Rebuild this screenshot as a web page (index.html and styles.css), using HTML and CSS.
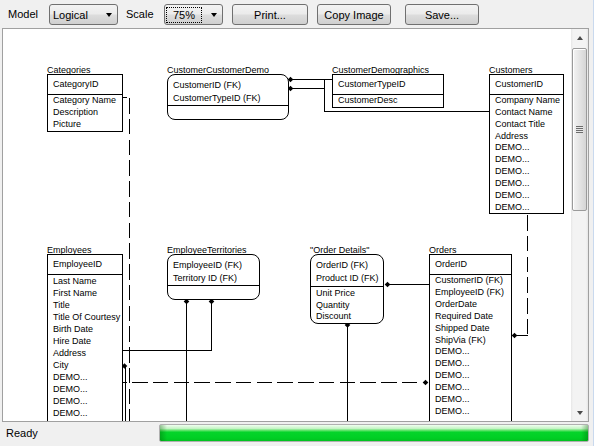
FILE: index.html
```html
<!DOCTYPE html>
<html>
<head>
<meta charset="utf-8">
<link rel="stylesheet" href="styles.css">
</head>
<body>
<div class="app">
  <div class="toolbar">
    <span class="lbl lbl-model">Model</span>
    <div class="combo combo-model"><span class="val">Logical</span><span class="arrow"></span></div>
    <span class="lbl lbl-scale">Scale</span>
    <div class="combo combo-scale"><span class="val focus">75%</span><span class="arrow"></span></div>
    <button class="btn btn-print">Print...</button>
    <button class="btn btn-copy">Copy Image</button>
    <button class="btn btn-save">Save...</button>
  </div>

  <div class="canvas">
    <div class="diagram">
      <svg class="links" width="568" height="392" viewBox="3 29 568 392">
        <g class="solid">
          <path d="M290 79.5 H332"/>
          <path d="M290 88.5 H324.5"/>
          <path d="M324.5 79 V111.5 H489"/>
          <path d="M122 97.5 H127"/>
          <path d="M515 335.5 H528"/>
          <path d="M211.5 301 V350.5 H122"/>
          <path d="M186.5 301 V421"/>
          <path d="M387 284.5 H429"/>
          <path d="M347.5 325 V421"/>
          <path d="M125.5 366 V421"/>
        </g>
        <g class="dashed">
          <path d="M129.5 98 V421"/>
          <path d="M527.5 215 V335"/>
          <path class="dash-h" d="M122 382.5 H425"/>
        </g>
        <g class="dia">
          <polygon points="290.5,76.7 293.3,79.5 290.5,82.3 287.7,79.5"/>
          <polygon points="290.5,85.7 293.3,88.5 290.5,91.3 287.7,88.5"/>
          <polygon points="514.5,332.7 517.3,335.5 514.5,338.3 511.7,335.5"/>
          <polygon points="211.5,298.7 214.3,301.5 211.5,304.3 208.7,301.5"/>
          <polygon points="186.5,298.7 189.3,301.5 186.5,304.3 183.7,301.5"/>
          <polygon points="387.5,281.7 390.3,284.5 387.5,287.3 384.7,284.5"/>
          <polygon points="347.5,322.2 350.3,325 347.5,327.8 344.7,325"/>
          <polygon points="425.5,379.7 428.3,382.5 425.5,385.3 422.7,382.5"/>
          <polygon points="124.5,363.2 127.3,366 124.5,368.8 121.7,366"/>
        </g>
      </svg>

      <div class="entity e-categories">
        <div class="ent-title">Categories</div>
        <div class="ent-box">
          <div class="ent-key">CategoryID</div>
          <div class="ent-attrs">
            <div>Category Name</div>
            <div>Description</div>
            <div>Picture</div>
          </div>
        </div>
      </div>

      <div class="entity e-ccd">
        <div class="ent-title">CustomerCustomerDemo</div>
        <div class="ent-box round">
          <div class="ent-upper">
            <div>CustomerID (FK)</div>
            <div>CustomerTypeID (FK)</div>
          </div>
          <div class="ent-lower"></div>
        </div>
      </div>

      <div class="entity e-cd">
        <div class="ent-title">CustomerDemographics</div>
        <div class="ent-box">
          <div class="ent-key">CustomerTypeID</div>
          <div class="ent-attrs">
            <div>CustomerDesc</div>
          </div>
        </div>
      </div>

      <div class="entity e-customers">
        <div class="ent-title">Customers</div>
        <div class="ent-box">
          <div class="ent-key">CustomerID</div>
          <div class="ent-attrs">
            <div>Company Name</div>
            <div>Contact Name</div>
            <div>Contact Title</div>
            <div>Address</div>
            <div>DEMO...</div>
            <div>DEMO...</div>
            <div>DEMO...</div>
            <div>DEMO...</div>
            <div>DEMO...</div>
            <div>DEMO...</div>
          </div>
        </div>
      </div>

      <div class="entity e-employees">
        <div class="ent-title">Employees</div>
        <div class="ent-box open">
          <div class="ent-key">EmployeeID</div>
          <div class="ent-attrs">
            <div>Last Name</div>
            <div>First Name</div>
            <div>Title</div>
            <div>Title Of Courtesy</div>
            <div>Birth Date</div>
            <div>Hire Date</div>
            <div>Address</div>
            <div>City</div>
            <div>DEMO...</div>
            <div>DEMO...</div>
            <div>DEMO...</div>
            <div>DEMO...</div>
          </div>
        </div>
      </div>

      <div class="entity e-et">
        <div class="ent-title">EmployeeTerritories</div>
        <div class="ent-box round">
          <div class="ent-upper">
            <div>EmployeeID (FK)</div>
            <div>Territory ID (FK)</div>
          </div>
          <div class="ent-lower"></div>
        </div>
      </div>

      <div class="entity e-od">
        <div class="ent-title">"Order Details"</div>
        <div class="ent-box round">
          <div class="ent-upper">
            <div>OrderID (FK)</div>
            <div>Product ID (FK)</div>
          </div>
          <div class="ent-lower">
            <div>Unit Price</div>
            <div>Quantity</div>
            <div>Discount</div>
          </div>
        </div>
      </div>

      <div class="entity e-orders">
        <div class="ent-title">Orders</div>
        <div class="ent-box open">
          <div class="ent-key">OrderID</div>
          <div class="ent-attrs">
            <div>CustomerID (FK)</div>
            <div>EmployeeID (FK)</div>
            <div>OrderDate</div>
            <div>Required Date</div>
            <div>Shipped Date</div>
            <div>ShipVia (FK)</div>
            <div>DEMO...</div>
            <div>DEMO...</div>
            <div>DEMO...</div>
            <div>DEMO...</div>
            <div>DEMO...</div>
            <div>DEMO...</div>
          </div>
        </div>
      </div>
    </div>

    <div class="vscroll">
      <div class="sb-btn sb-up"><span class="tri-up"></span></div>
      <div class="sb-track">
        <div class="sb-thumb"><span class="grip"></span></div>
      </div>
      <div class="sb-btn sb-down"><span class="tri-down"></span></div>
    </div>
  </div>

  <div class="status">
    <span class="ready">Ready</span>
    <div class="progress"></div>
  </div>
</div>
</body>
</html>
```

FILE: styles.css
```css
* { box-sizing: border-box; }
html, body { margin: 0; padding: 0; }
body {
  background: #f0f0f0;
  font-family: "Liberation Sans", Arial, sans-serif;
  font-size: 11px;
  color: #000;
  width: 594px;
  height: 446px;
  overflow: hidden;
}
.app {
  width: 594px;
  height: 446px;
  display: flex;
  flex-direction: column;
  box-shadow: inset -1px 0 0 #c9d9ee;
}

/* toolbar */
.toolbar {
  height: 28px;
  padding-top: 4px;
  display: flex;
  align-items: flex-start;
}
.lbl {
  height: 21px;
  line-height: 20px;
  white-space: nowrap;
}
.lbl-model { margin-left: 8px; width: 41px; }
.lbl-scale { margin-left: 8px; width: 38px; }
.combo, .btn {
  height: 21px;
  border: 1px solid #707070;
  border-radius: 3px;
  background: linear-gradient(180deg, #f3f3f3 0%, #ebebeb 48%, #dddddd 52%, #cfcfcf 100%);
  font-family: "Liberation Sans", Arial, sans-serif;
  font-size: 11px;
  color: #000;
}
.combo {
  display: flex;
  align-items: center;
}
.combo-model { width: 69px; padding-left: 3px; }
.combo-scale { width: 59px; padding-left: 1px; }
.val { white-space: nowrap; }
.focus {
  width: 36px;
  height: 16px;
  line-height: 14px;
  border: 1px dotted #000;
  text-align: center;
}
.arrow {
  margin-left: auto;
  margin-right: 5px;
  width: 0;
  height: 0;
  border-top: 4px solid #000;
  border-left: 3.5px solid transparent;
  border-right: 3.5px solid transparent;
}
.btn {
  padding: 0;
  text-align: center;
  line-height: 18px;
}
.btn-print { margin-left: 9px; width: 76px; }
.btn-copy { margin-left: 9px; width: 74px; }
.btn-save { margin-left: 14px; width: 74px; }

/* canvas */
.canvas {
  margin-left: 2px;
  width: 587px;
  height: 394px;
  border: 1px solid #a0a0a0;
  display: flex;
}
.diagram {
  position: relative;
  width: 568px;
  height: 392px;
  background: #fff;
  overflow: hidden;
  font-family: "Liberation Sans", Arial, sans-serif;
  font-size: 9px;
}
.links {
  position: absolute;
  left: 0;
  top: 0;
}
.links path {
  fill: none;
  stroke: #000;
  stroke-width: 1;
  shape-rendering: crispEdges;
}
.links .dashed path {
  stroke-dasharray: 15.5 5.25;
}
.links .dashed .dash-h {
  stroke-dashoffset: 10.75;
}
.links .dia polygon { fill: #000; }

.entity {
  position: absolute;
  white-space: nowrap;
}
.ent-title {
  height: 10px;
  line-height: 12px;
}
.ent-box {
  border: 1px solid #000;
  background: #fff;
}
.ent-key {
  height: 20px;
  line-height: 19px;
  padding-left: 5px;
  border-bottom: 1px solid #000;
}
.ent-attrs {
  padding-left: 5px;
  line-height: 11.85px;
}
.open .ent-attrs { padding-bottom: 12px; }
.round { border-radius: 8px; }
.ent-upper {
  height: 31px;
  padding: 4px 0 0 5px;
  line-height: 12.5px;
  border-bottom: 1px solid #000;
}
.ent-lower {
  height: 13px;
  padding-left: 5px;
  line-height: 11.7px;
}

.e-categories { left: 44px; top: 35px; width: 76px; }
.e-ccd { left: 164px; top: 35px; width: 122px; }
.e-cd { left: 329px; top: 35px; width: 112px; }
.e-customers { left: 486px; top: 35px; width: 75px; }
.e-employees { left: 44px; top: 215px; width: 76px; }
.e-et { left: 164px; top: 215px; width: 93px; }
.e-od { left: 307px; top: 215px; width: 74px; }
.e-od .ent-upper { height: 32px; }
.e-od .ent-lower { height: 36px; padding-top: 1px; }
.e-orders { left: 426px; top: 215px; width: 83px; }
.e-employees .ent-attrs { line-height: 12px; }
.e-orders .ent-attrs { line-height: 11.9px; }

/* scrollbar */
.vscroll {
  width: 17px;
  height: 392px;
  display: flex;
  flex-direction: column;
  background: linear-gradient(90deg, #e6e6e6 0, #f3f3f3 2px, #f3f3f3 15px, #e6e6e6 17px);
}
.sb-btn {
  height: 17px;
  display: flex;
  align-items: center;
  justify-content: center;
}
.tri-up {
  width: 0; height: 0;
  border-bottom: 4px solid #4a4a4a;
  border-left: 3.5px solid transparent;
  border-right: 3.5px solid transparent;
}
.tri-down {
  width: 0; height: 0;
  border-top: 4px solid #4a4a4a;
  border-left: 3.5px solid transparent;
  border-right: 3.5px solid transparent;
}
.sb-track {
  flex: 1;
  padding-top: 2px;
}
.sb-thumb {
  margin-left: 1px;
  width: 15px;
  height: 163px;
  border: 1px solid #9a9a9a;
  border-radius: 2px;
  background: linear-gradient(90deg, #f4f4f4 0%, #e6e6e6 45%, #d5d5d5 100%);
  box-shadow: inset 1px 1px 0 #fff;
  display: flex;
  align-items: center;
  justify-content: center;
}
.grip {
  width: 7px;
  height: 7px;
  background: repeating-linear-gradient(180deg, #6c6c6c 0, #6c6c6c 1px, #e8e8e8 1px, #e8e8e8 2px);
}

/* status */
.status {
  flex: 1;
  display: flex;
  align-items: flex-start;
}
.ready {
  margin-left: 6px;
  width: 153px;
  line-height: 22px;
}
.progress {
  margin-top: 2px;
  width: 430px;
  height: 18px;
  border: 1px solid #b0b0b0;
  border-radius: 2px;
  background:
    linear-gradient(90deg, rgba(0,90,0,0.35) 0, rgba(0,90,0,0) 7px, rgba(0,90,0,0) calc(100% - 7px), rgba(0,90,0,0.35) 100%),
    linear-gradient(180deg, #f0fff0 0%, #c4f4c4 22%, #5ee36a 34%, #04d42a 45%, #00cf25 80%, #00c21f 100%);
}
```
